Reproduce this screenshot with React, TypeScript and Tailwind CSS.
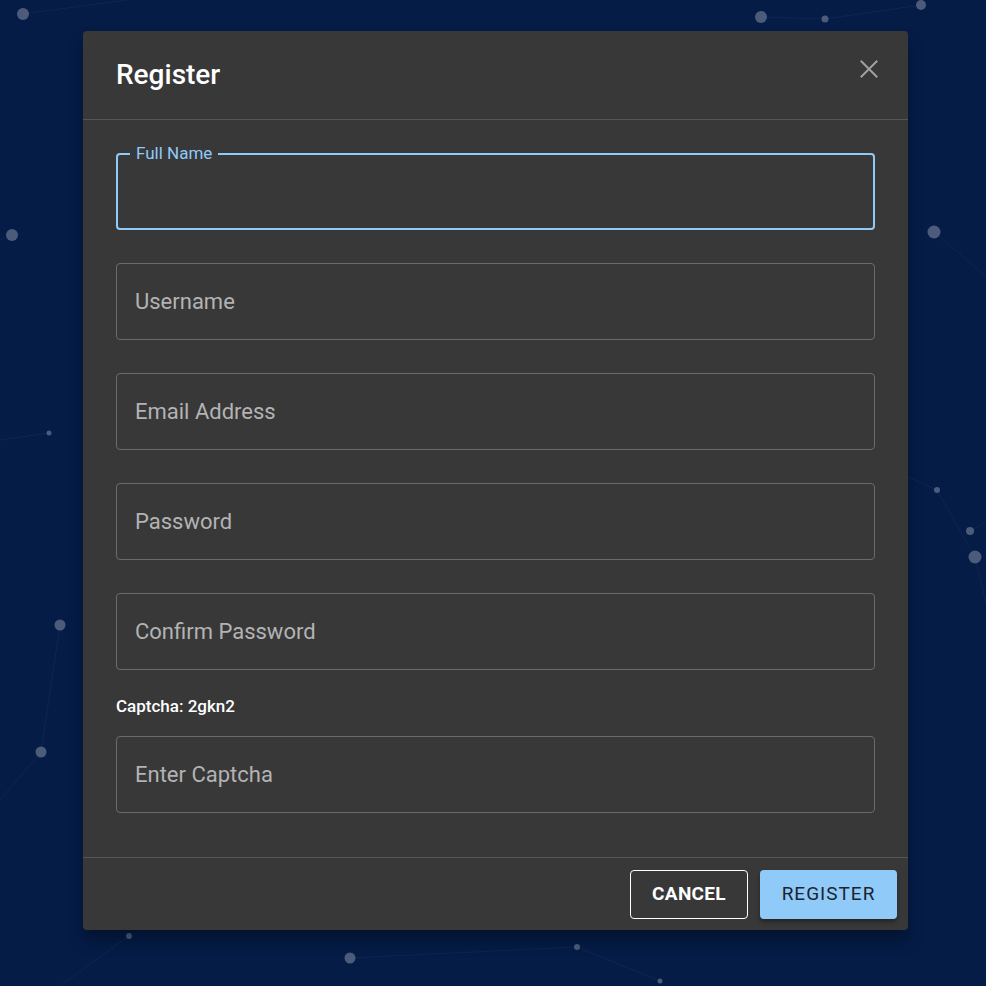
import React from "react";

const dots: [number, number, number][] = [
  [23, 14, 6], [761, 17, 6], [825, 19, 3.5], [921, 5, 5], [12, 235, 6], [934, 232, 6.5],
  [49, 433, 2.5], [937, 490, 3], [970, 531, 4], [975, 557, 6.5], [60, 625, 5.5],
  [41, 752, 5.5], [129, 936, 3], [350, 958, 5.5], [577, 947, 3], [660, 981, 2.5],
];

const lines: [number, number, number, number][] = [
  [23, 14, 200, -10], [761, 17, 825, 19], [825, 19, 921, 5], [934, 232, 990, 280],
  [937, 490, 975, 557], [937, 490, 870, 460], [970, 531, 990, 520], [975, 557, 990, 620],
  [49, 433, 0, 440], [60, 625, 41, 752], [41, 752, 0, 800], [129, 936, 60, 986],
  [350, 958, 577, 947], [577, 947, 660, 981], [12, 235, 0, 240],
];

function Background() {
  return (
    <svg className="absolute inset-0" width="986" height="986" viewBox="0 0 986 986">
      {lines.map(([x1, y1, x2, y2], i) => (
        <line key={i} x1={x1} y1={y1} x2={x2} y2={y2} stroke="#5b6b8c" strokeOpacity="0.12" strokeWidth="1" />
      ))}
      {dots.map(([cx, cy, r], i) => (
        <circle key={i} cx={cx} cy={cy} r={r} fill="#6b7690" fillOpacity="0.7" />
      ))}
    </svg>
  );
}

function Field({ label }: { label: string }) {
  return (
    <div className="h-[77px] rounded-[4px] border border-[#6b6b6b] flex items-center px-[18px]">
      <span className="text-[22px] text-[#b3b3b3]">{label}</span>
    </div>
  );
}

export default function App() {
  return (
    <div
      className="relative w-[986px] h-[986px] overflow-hidden bg-[#051c47]"
      style={{ fontFamily: "Roboto, 'Liberation Sans', sans-serif" }}
    >
      <Background />
      <div className="relative pt-[31px] pl-[83px]">
        <div className="w-[825px] h-[899px] bg-[#383838] rounded-[4px] flex flex-col shadow-[0_11px_15px_rgba(0,0,0,0.3)]">
          {/* Header */}
          <div className="h-[89px] shrink-0 border-b border-[#555555] flex items-center justify-between pl-[33px] pr-[28px]">
            <h1 className="text-[28px] font-medium text-white">Register</h1>
            <svg width="22" height="22" viewBox="0 0 24 24" className="mb-[12px]">
              <path d="M3 3 L21 21 M21 3 L3 21" stroke="#a3a3a3" strokeWidth="2" />
            </svg>
          </div>

          {/* Body */}
          <div className="flex-1 px-[33px] pt-[33px] flex flex-col">
            <div className="relative h-[77px] rounded-[4px] border-2 border-[#90caf9]">
              <span className="absolute -top-[12px] left-[12px] px-[6px] bg-[#383838] text-[17px] leading-[20px] text-[#90caf9]">
                Full Name
              </span>
            </div>
            <div className="mt-[33px] flex flex-col gap-[33px]">
              <Field label="Username" />
              <Field label="Email Address" />
              <Field label="Password" />
              <Field label="Confirm Password" />
            </div>
            <p className="mt-[25px] text-[17px] font-medium text-white leading-[22px]">Captcha: 2gkn2</p>
            <div className="mt-[19px]">
              <Field label="Enter Captcha" />
            </div>
          </div>

          {/* Footer */}
          <div className="h-[73px] shrink-0 border-t border-[#555555] flex items-center justify-end gap-[12px] pl-[12px] pr-[11px]">
            <button className="h-[49px] w-[118px] rounded-[4px] border border-white text-white text-[19px] font-bold tracking-[0.3px]">
              CANCEL
            </button>
            <button className="h-[49px] w-[137px] rounded-[4px] bg-[#90caf9] text-[#1c2430] text-[19px] font-normal tracking-[1px] shadow-[0_3px_4px_rgba(0,0,0,0.35)]">
              REGISTER
            </button>
          </div>
        </div>
      </div>
    </div>
  );
}
